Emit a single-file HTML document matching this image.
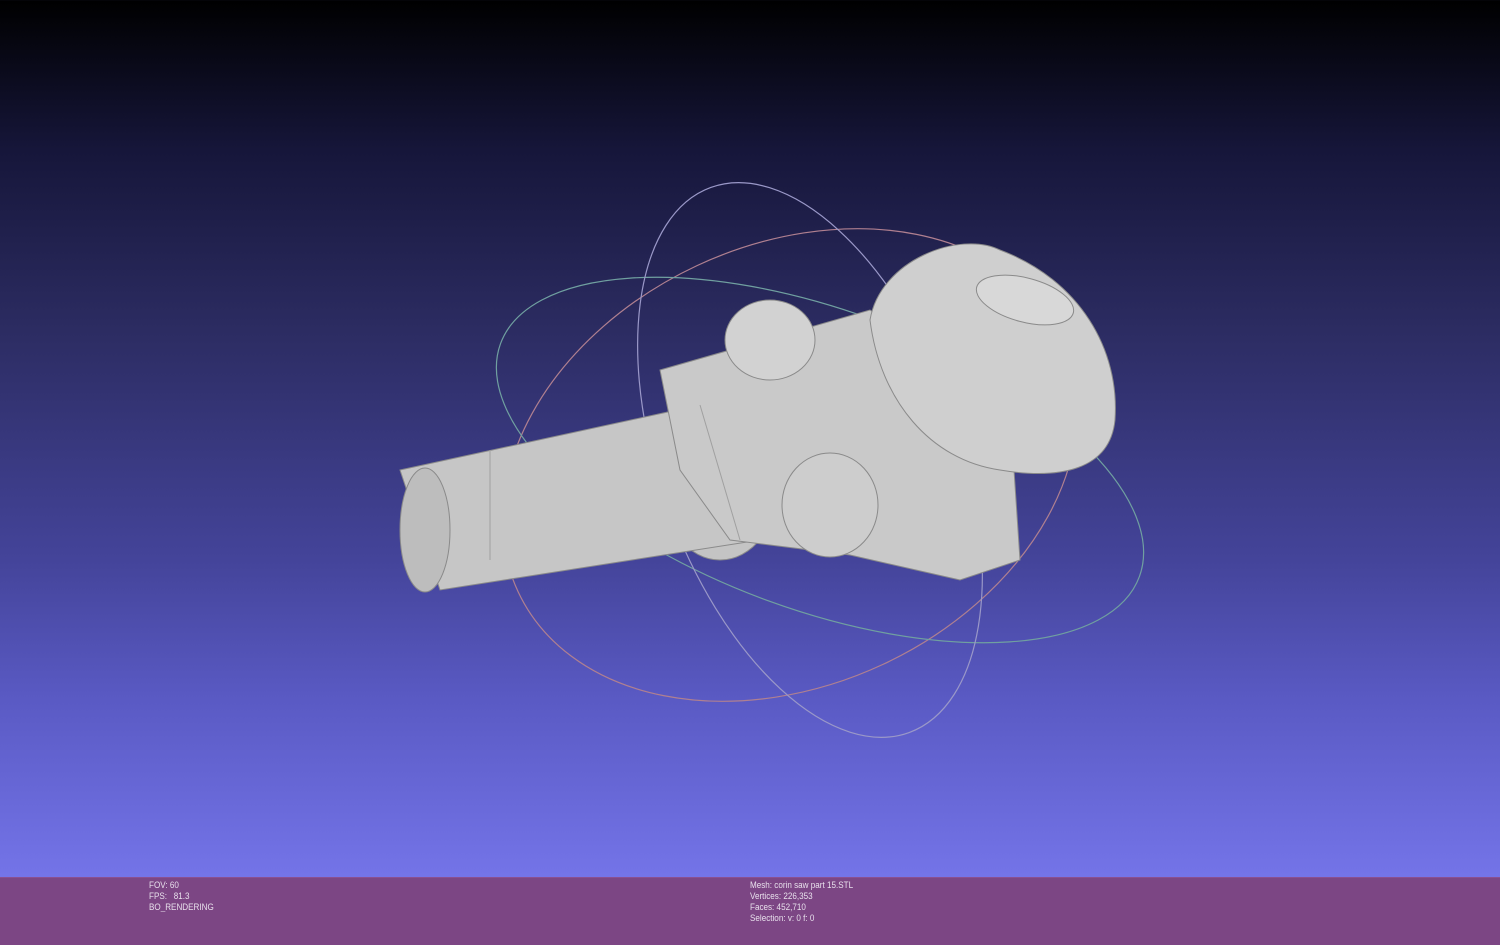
<!DOCTYPE html>
<html><head><style>
html,body{margin:0;padding:0;width:1500px;height:945px;overflow:hidden}
body{background:linear-gradient(#000 0px,#16163a 150px,#2c2c62 330px,#44449a 560px,#5a5ac4 700px,#7474e8 877px);position:relative;font-family:"Liberation Sans",sans-serif}
.bar{position:absolute;left:0;top:877px;width:1500px;height:68px;background:#7c4684;border-top:1px solid #8a5090}
.t{position:absolute;color:#e8e0ec;font-size:9px;line-height:11px;transform:scaleX(0.9);transform-origin:left}
svg{position:absolute;left:0;top:0}
</style></head><body>
<svg width="1500" height="877" viewBox="0 0 1500 877">
<g fill="none" stroke-width="1.2">
<ellipse cx="790" cy="465" rx="300" ry="220" transform="rotate(-25 790 465)" stroke="#b08090"/>
<ellipse cx="820" cy="460" rx="340" ry="150" transform="rotate(20 820 460)" stroke="#70a0a0"/>
<ellipse cx="810" cy="460" rx="150" ry="290" transform="rotate(-20 810 460)" stroke="#9a98c8"/>
</g>
<g stroke="#8a8a8a" stroke-width="1">
<ellipse cx="720" cy="480" rx="60" ry="80" fill="#c4c4c4"/>
<polygon points="400,470 700,405 760,540 440,590" fill="#c6c6c6"/>
<ellipse cx="425" cy="530" rx="25" ry="62" fill="#bdbdbd"/>
<polygon points="660,370 870,310 1010,410 1020,560 960,580 850,555 730,540 680,470" fill="#c9c9c9"/>
<path d="M870,320 C880,260 960,230 1000,250 C1080,280 1120,350 1115,420 C1110,470 1060,480 1000,470 C930,460 880,400 870,320Z" fill="#cfcfcf"/>
<ellipse cx="770" cy="340" rx="45" ry="40" fill="#d2d2d2"/>
<ellipse cx="830" cy="505" rx="48" ry="52" fill="#cdcdcd"/>
<ellipse cx="1025" cy="300" rx="50" ry="22" fill="#d8d8d8" transform="rotate(15 1025 300)"/>
<line x1="700" y1="405" x2="740" y2="540" stroke="#a0a0a0"/>
<line x1="490" y1="450" x2="490" y2="560" stroke="#a0a0a0"/>
</g>
</svg>
<div class="bar"></div>
<div class="t" style="left:149px;top:880px">FOV: 60<br>FPS: &nbsp;&nbsp;81.3<br>BO_RENDERING</div>
<div class="t" style="left:750px;top:880px">Mesh: corin saw part 15.STL<br>Vertices: 226,353<br>Faces: 452,710<br>Selection: v: 0 f: 0</div>
</body></html>
